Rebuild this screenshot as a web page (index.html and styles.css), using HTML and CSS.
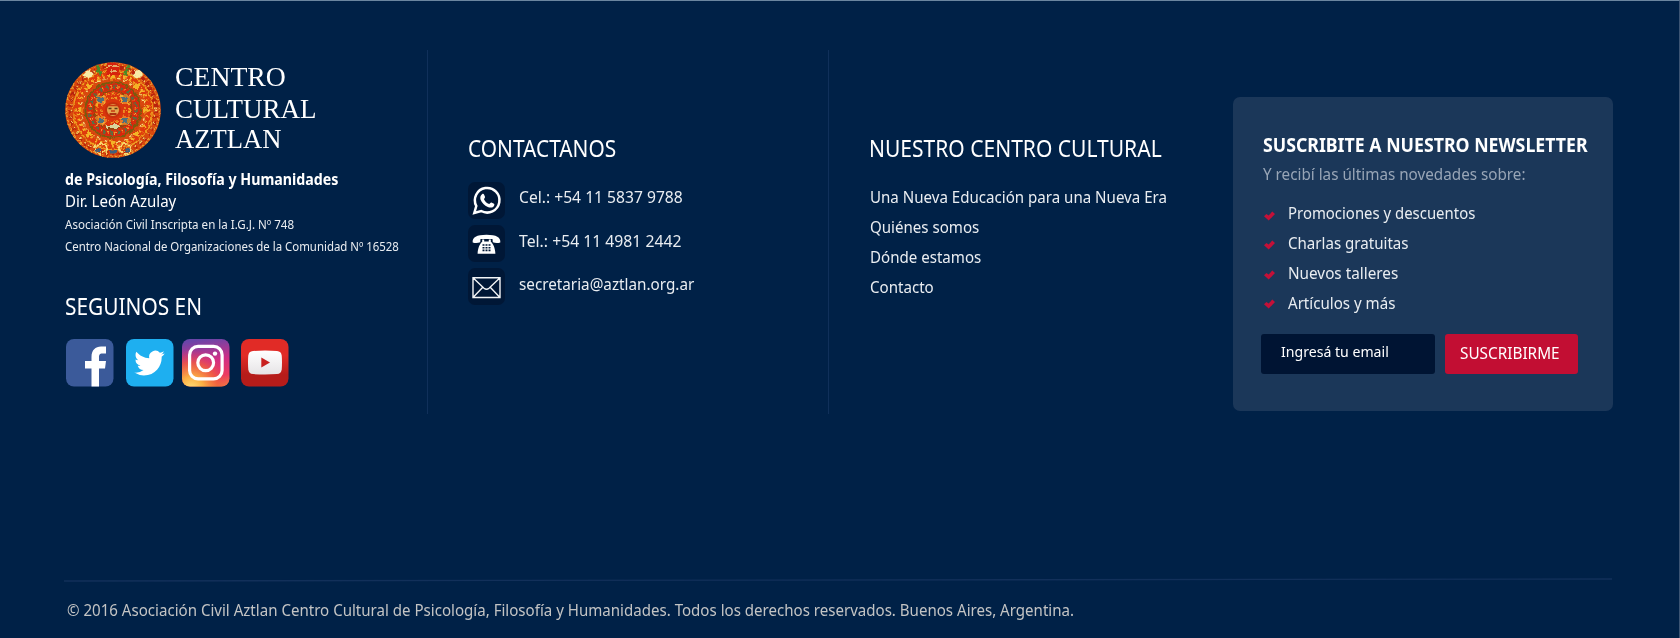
FILE: index.html
```
<!DOCTYPE html>
<html lang="es">
<head>
<meta charset="utf-8">
<title>Centro Cultural Aztlan</title>
<link rel="stylesheet" href="styles.css">
</head>
<body>
<footer class="footer">
  <div class="columns">
    <section class="col about">
      <div class="logo">
        <svg class="stone" viewBox="-48 -48 96 96" fill="none">
          <defs>
            <filter id="carve" x="-5%" y="-5%" width="110%" height="110%"><feTurbulence type="fractalNoise" baseFrequency=".3" numOctaves="2" seed="4"/><feDisplacementMap in="SourceGraphic" scale="5" xChannelSelector="R" yChannelSelector="G"/></filter>
            <clipPath id="disc"><circle r="47.8"/></clipPath>
          </defs>
          <circle r="47.8" fill="#d8480e"/>
          <g clip-path="url(#disc)"><g filter="url(#carve)">
            <circle r="46.5" stroke="#e8a030" stroke-width="1.6" stroke-dasharray="2.5 1.8"/>
            <circle r="43" stroke="#b8240a" stroke-width="4" stroke-dasharray="3 3"/>
            <circle r="42.500" stroke="#f3cf62" stroke-width="1.600" stroke-dasharray="2 4"/>
            <circle r="39.500" stroke="#f0a020" stroke-width="1.300"/>
            <circle r="36" stroke="#e0380a" stroke-width="4"/>
            <circle r="35" stroke="#f5b22a" stroke-width="3.500" stroke-dasharray="2 3.500"/>
            <circle r="32" stroke="#f6d87c" stroke-width="1.400" stroke-dasharray="4 3"/>
            <g fill="#f3b428" stroke="#d8380a"><path d="M0-40l4 10H-4zM0 40l4-10H-4zM-40 0l10 4V-4zM40 0l-10 4V-4z"/><path d="M-28-28l9 3-6 6zM28-28l-9 3 6 6zM-28 28l9-3-6-6zM28 28l-9-3 6-6z"/></g>
            <circle r="27.500" stroke="#7c5a10" stroke-width="2.200"/>
            <circle r="23.500" fill="#d9360c" stroke="#d8280a" stroke-width="6"/>
            <circle r="23" stroke="#557044" stroke-width="3.600" stroke-dasharray="2.600 4.600"/>
            <circle r="23" stroke="#f0b43c" stroke-width="3" stroke-dasharray="1 6.200" stroke-dashoffset="3"/>
            <circle r="19" stroke="#8a4a0c" stroke-width="1.500"/>
            <circle r="16.500" stroke="#f3a824" stroke-width="1.600" stroke-dasharray="3 2"/>
            <circle r="12" stroke="#f0a428" stroke-width="1.600" stroke-dasharray="2 2.500"/>
            <g fill="#50707c"><path d="M-15-13h6v5h-6zM9-13h6v5H9zM-15 8h6v5h-6zM9 8h6v5H9z"/></g>
            <g stroke="#f5b83e"><path d="M-16-14h8v7h-8zM8-14h8v7H8zM-16 7h8v7h-8zM8 7h8v7H8z"/></g>
            <path d="M-7 15H7v3H-7z" fill="#d9d59a"/>
            <path d="M-25-41l6 5-6 5-5-5zM25-41l-6 5 6 5 5-5z" fill="#f8eaa4"/>
            <path d="M-16-45l4 10M16-45l-4 10" stroke="#4c8a28" stroke-width="3"/>
            <path d="M-6-47H6v12H-6z" fill="#d6220a"/><path d="M-5-44H5M-4-39h8" stroke="#ead488" stroke-width="1.500"/>
            <path d="M-12 44c-8 0-8-10 0-10s8 8 2 8M12 44c8 0 8-10 0-10s-8 8-2 8" stroke="#f8dc70" stroke-width="1.800"/>
            <path d="M-17 40h5M12 40h5M-3 42h6" stroke="#40617c" stroke-width="3"/>
          </g></g>
          <circle r="7" fill="#e4a64e" stroke="#c6300c" stroke-width="2"/>
          <path d="M-5-4.500H5M-2 1h4" stroke="#c63a10" stroke-width="1.600"/>
          <path d="M-4.500-1.500h3M1.500-1.500h3" stroke="#5a3c14" stroke-width="1.400"/>
          <path d="M-3.500 4h7" stroke="#a32208" stroke-width="1.800"/>
        </svg>
        <div class="brand"><span class="b1">CENTRO</span><span class="b2">CULTURAL</span><span class="b3">AZTLAN</span></div>
      </div>
      <p class="fit tagline">de Psicología, Filosofía y Humanidades</p>
      <p class="fit director">Dir. León Azulay</p>
      <p class="fit legal legal-a">Asociación Civil Inscripta en la I.G.J. Nº 748</p>
      <p class="fit legal legal-b">Centro Nacional de Organizaciones de la Comunidad Nº 16528</p>
      <h2 class="fit heading follow">SEGUINOS EN</h2>
      <div class="social">
        <svg class="fb" viewBox="0 0 48 48"><rect width="47.5" height="47.5" rx="8" fill="#3b5a9a"/><path d="M25.500 47.500V29.500h-6.500v-7.500h6.500v-4c0-7 4-10.500 9.500-10.500h5v7h-3.500c-3 0-3.500 1.500-3.500 4v3.500h7l-1 7.500h-6v18z" fill="#fff"/></svg>
        <svg class="tw" viewBox="0 0 48 48"><rect width="47.500" height="47.500" rx="8" fill="#1eaff0"/><path transform="translate(8.300 8.800) scale(1.270)" d="M23.950 4.570a10 10 0 0 1-2.820.77 4.960 4.960 0 0 0 2.160-2.720c-.95.550-2 .950-3.120 1.190a4.920 4.920 0 0 0-8.380 4.480C7.690 8.090 4.070 6.130 1.640 3.160a4.820 4.820 0 0 0-.67 2.480c0 1.710.870 3.210 2.190 4.100a4.900 4.900 0 0 1-2.230-.62v.06a4.920 4.920 0 0 0 3.950 4.830 5 5 0 0 1-2.210.080 4.940 4.940 0 0 0 4.600 3.420A9.870 9.870 0 0 1 0 19.540a13.990 13.990 0 0 0 7.550 2.210c9.050 0 14-7.500 14-13.980 0-.210 0-.420-.020-.630a9.940 9.940 0 0 0 2.420-2.570z" fill="#fff"/></svg>
        <svg class="ig" viewBox="0 0 48 48"><defs><linearGradient id="iga" x1=".5" y1="0" x2=".65" y2="1"><stop offset="0" stop-color="#6a45a8"/><stop offset=".45" stop-color="#cf2f86"/><stop offset=".8" stop-color="#ee3a60"/><stop offset="1" stop-color="#f5803c"/></linearGradient><radialGradient id="igb" cx=".2" cy="1.050" r=".85"><stop offset="0" stop-color="#ffe07a"/><stop offset=".3" stop-color="#fbb044"/><stop offset=".65" stop-color="#f0603c" stop-opacity=".75"/><stop offset="1" stop-color="#e03070" stop-opacity="0"/></radialGradient></defs><rect width="47.500" height="47.500" rx="8" fill="url(#iga)"/><rect width="47.500" height="47.500" rx="8" fill="url(#igb)"/><g fill="none" stroke="#fff" stroke-width="3.200"><rect x="7.600" y="7.400" width="32.500" height="32.500" rx="8.500"/><circle cx="23.700" cy="23.700" r="7.900"/></g><circle cx="33" cy="14.600" r="2.200" fill="#fff"/></svg>
        <svg class="yt" viewBox="0 0 48 48"><defs><linearGradient id="yta" x2="0" y2="1"><stop offset=".35" stop-color="#e12b26"/><stop offset=".75" stop-color="#b61c1a"/></linearGradient><linearGradient id="ytb" x2="0" y2="1"><stop offset="0" stop-color="#fff"/><stop offset="1" stop-color="#e6e4e6"/></linearGradient></defs><rect width="47.500" height="47.500" rx="8" fill="url(#yta)"/><path d="M12 12q12-.8 24 0 4.300.4 4.700 4.500.6 7 0 14-.4 4.200-4.700 4.600-12 .8-24 0-4.300-.4-4.700-4.600-.6-7 0-14Q7.700 12.400 12 12z" fill="url(#ytb)"/><path d="M20.300 18.600v10l8.700-5z" fill="#c9201f"/></svg>
      </div>
    </section>
    <section class="col contact">
      <h2 class="fit heading">CONTACTANOS</h2>
      <ul class="phones">
        <li><svg class="badge" viewBox="0 0 37 37"><rect width="37" height="37" rx="7" fill="#001736"/><path d="M6.300 31l2-7A12.300 12.300 0 1 1 13.200 29z" fill="none" stroke="#fff" stroke-width="2.500"/><path d="M14 12.300c.8-.8 1.700-.6 2 .2l1 2.300c.3.800-.9 1.800-1 2.400.9 2.200 2.800 4 5.100 4.800.7-.1 1.600-1.800 2.400-1.400l2.500 1.200c.7.400.3 1.900-.4 2.600-1.500 1.500-3.700 1.500-5.800.6-3.300-1.300-5.900-3.900-7.200-7.200-.6-2-.4-4 1.400-5.500z" fill="#fff"/></svg><span class="fit cel">Cel.: +54 11 5837 9788</span></li>
        <li><svg class="badge" viewBox="0 0 37 37"><rect width="37" height="37" rx="7" fill="#001736"/><path d="M4.700 17.500c-.7-5 4-7.700 13.800-7.700s14.500 2.700 13.800 7.700c-2.600.8-5.300.7-7.500-.3l-.3-3.200h-12l-.3 3.200c-2.200 1-4.900 1.100-7.500.3z" fill="#fff"/><path d="M14.200 14.500h2v2h4.600v-2h2v2.300c2.500 2 4.300 6.200 4.600 11.900H9.600c.3-5.700 2.100-9.900 4.600-11.900z" fill="#fff"/><path d="M14.500 20h2m1 0h2m1 0h2m-8 2.700h2m1 0h2m1 0h2m-8 2.700h2m1 0h2m1 0h2" stroke="#001736" stroke-width="1.600"/></svg><span class="fit tel">Tel.: +54 11 4981 2442</span></li>
        <li><svg class="badge" viewBox="0 0 37 37"><rect width="37" height="37" rx="7" fill="#001736"/><path d="M5 9.800h27v19.700H5zM5 9.800l11 10.500q2.500 2 5 0L32 9.800M5 29.500l9.800-10.200M32 29.500l-9.800-10.200" fill="none" stroke="#f2f4f6" stroke-width="1.400"/></svg><span class="fit mail">secretaria@aztlan.org.ar</span></li>
      </ul>
    </section>
    <section class="col center">
      <h2 class="fit heading wide">NUESTRO CENTRO CULTURAL</h2>
      <nav class="links"><a class="fit">Una Nueva Educación para una Nueva Era</a><a class="fit">Quiénes somos</a><a class="fit">Dónde estamos</a><a class="fit">Contacto</a></nav>
    </section>
    <section class="card">
      <h2 class="fit card-title">SUSCRIBITE A NUESTRO NEWSLETTER</h2>
      <p class="fit card-sub">Y recibí las últimas novedades sobre:</p>
      <ul class="topics">
        <li><svg class="check" viewBox="0 0 11 10"><path d="M0 5.300L2.400 2.900 4.600 4.600 8.300 .6 11 2.900 4.700 9.500z" fill="#c41038"/></svg><span class="fit promo">Promociones y descuentos</span></li>
        <li><svg class="check c2" viewBox="0 0 11 10"><path d="M0 5.300L2.400 2.900 4.600 4.600 8.300 .6 11 2.900 4.700 9.500z" fill="#c41038"/></svg><span class="fit talks">Charlas gratuitas</span></li>
        <li><svg class="check c3" viewBox="0 0 11 10"><path d="M0 5.300L2.400 2.900 4.600 4.600 8.300 .6 11 2.900 4.700 9.500z" fill="#c41038"/></svg><span class="fit shops">Nuevos talleres</span></li>
        <li><svg class="check c4" viewBox="0 0 11 10"><path d="M0 5.300L2.400 2.900 4.600 4.600 8.300 .6 11 2.900 4.700 9.500z" fill="#c41038"/></svg><span class="fit more">Artículos y más</span></li>
      </ul>
      <div class="form"><div class="field"><span class="fit">Ingresá tu email</span></div><div class="button"><span class="fit">SUSCRIBIRME</span></div></div>
    </section>
  </div>
  <svg class="rule" viewBox="0 0 1548 4"><path d="M0 3L1548 1" stroke="#12305a" stroke-width="1.300"/></svg>
  <p class="fit copyright">© 2016 Asociación Civil Aztlan Centro Cultural de Psicología, Filosofía y Humanidades. Todos los derechos reservados. Buenos Aires, Argentina.</p>
</footer>
</body>
</html>
```
FILE: styles.css
```
* { box-sizing: border-box; margin: 0; padding: 0; }
body { background: #002147; color: #e9edf1; font: 16px/24px "Noto Sans", sans-serif; }
svg { display: block; flex: none; }
ul { list-style: none; }
.fit { display: block; width: max-content; white-space: nowrap; transform-origin: 0 50%; transform: scaleX(.943); }
.footer { height: 638px; border-top: 1px solid #6b86a0; border-right: 1px solid #3c5473; overflow: hidden; }
.columns { display: flex; align-items: flex-start; padding-top: 49px; }
.col { height: 364px; flex: none; }

.about { width: 427px; padding: 12px 0 0 65px; }
.logo { display: flex; height: 96px; }
.stone { width: 96px; height: 96px; }
.brand { margin: -1px 0 0 13.5px; font: 28px/32px "Liberation Serif", serif; color: #fff; }
.brand span { display: block; width: max-content; transform-origin: 0 50%; }
.brand .b1 { transform: scaleX(.99); }
.brand .b2 { transform: scaleX(.965); }
.brand .b3 { line-height: 28px; transform: scaleX(.95); }
.tagline { margin-top: 10px; font-weight: 700; line-height: 22px; color: #fff; transform: scaleX(.889); }
.director { margin-top: 1px; line-height: 21px; color: #fff; transform: scaleX(.94); }
.legal { font-size: 12.5px; }
.legal-a { margin-top: 1px; line-height: 24px; transform: scaleX(.926); }
.legal-b { line-height: 20px; transform: scaleX(.913); }
.heading { font-size: 23px; font-weight: 400; line-height: 30px; color: #fff; transform: scaleX(.907); }
.follow { margin-top: 34px; }
.social { display: flex; margin-top: 18px; padding-left: 1px; }
.social svg { width: 48px; height: 48px; }
.social .tw { margin-left: 11.5px; }
.ig { margin-left: 8.5px; }
.yt { margin-left: 10.5px; }

.contact { width: 401px; padding: 83px 0 0 39.5px; border-left: 1px solid #10305a; }
.phones { margin-top: 19px; padding-left: .5px; display: grid; gap: 6px; }
.phones li { display: flex; height: 37px; }
.badge { width: 37px; height: 37px; }
.phones span { margin-left: 14px; }
.phones .cel { margin-top: 3px; transform: scaleX(.978); }
.phones .tel { margin-top: 4px; transform: scaleX(.984); }
.phones .mail { margin-top: 4px; transform: scaleX(.953); }

.center { width: 405px; padding: 83px 0 0 40px; border-left: 1px solid #10305a; }
.wide { transform: scaleX(.914); }
.links { margin-top: 19px; padding-left: 1px; line-height: 30px; }

.card { width: 380px; height: 314px; margin-top: 47px; padding: 35px 0 0 28px; border-radius: 7px; background: #1b3759; flex: none; }
.card-title { margin-left: 1.5px; font-size: 19.5px; line-height: 25px; color: #fff; transform: scaleX(.909); }
.card-sub { margin: 4px 0 0 2px; line-height: 26px; color: #98a5b6; transform: scaleX(.952); }
.topics { margin: 11px 0 0 3px; line-height: 30px; }
.topics li { display: flex; height: 30px; }
.check { width: 11px; height: 10px; margin: 13px 13px 0 0; }
.c2 { margin-top: 12px; }
.c3 { margin-top: 12px; }
.c4 { margin-top: 11px; }
.promo { transform: scaleX(.932); }
.shops { transform: scaleX(.955); }
.form { display: flex; gap: 10.5px; margin-top: 16px; line-height: 35px; color: #fff; }
.field { width: 173.5px; height: 39.5px; padding-left: 20px; border-radius: 3px; background: #001433; font-size: 15px; }
.field .fit { transform: scaleX(.94); }
.button { width: 133px; height: 39.5px; padding-left: 14.5px; border-radius: 3px; background: #c20e33; }
.button .fit { transform: scaleX(.958); line-height: 38px; }

.rule { width: 1548px; height: 4px; margin: 164px 0 0 64px; }
.copyright { margin: 16px 0 0 66.5px; color: #c3c4c4; transform: scaleX(.942); }
```
